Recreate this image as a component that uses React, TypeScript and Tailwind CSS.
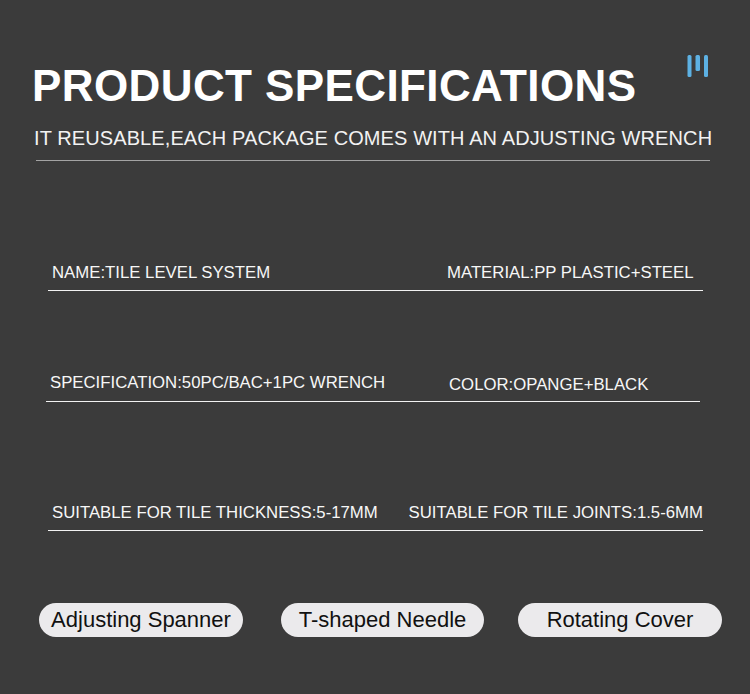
const font = { fontFamily: '"Liberation Sans", Arial, Helvetica, sans-serif' };

type Row = {
  left: string;
  right: string;
  box: string;
  leftCol: string;
  rightCls?: string;
};

const ROWS: Row[] = [
  { left: "NAME:TILE LEVEL SYSTEM", right: "MATERIAL:PP PLASTIC+STEEL", box: "mt-[104px] ml-[48px] w-[655px]", leftCol: "w-[399px]" },
  { left: "SPECIFICATION:50PC/BAC+1PC WRENCH", right: "COLOR:OPANGE+BLACK", box: "mt-[84px] ml-[46px] w-[654px]", leftCol: "w-[403px]", rightCls: "pt-[2px]" },
  { left: "SUITABLE FOR TILE THICKNESS:5-17MM", right: "SUITABLE FOR TILE JOINTS:1.5-6MM", box: "mt-[103px] ml-[48px] w-[655px]", leftCol: "w-[364px]" },
];

const PILLS = [
  { label: "Adjusting Spanner", cls: "ml-[39px] w-[204px]" },
  { label: "T-shaped Needle", cls: "ml-[38px] w-[203px]" },
  { label: "Rotating Cover", cls: "ml-[34px] w-[204px]" },
];

function BarsIcon() {
  return (
    <svg width="22" height="22" viewBox="0 0 22 22" className="mr-[41px]">
      <rect x="0.5" y="0" width="4" height="22" rx="1.5" fill="#5db1e3" />
      <rect x="8.5" y="0" width="4.5" height="16" rx="1.5" fill="#5db1e3" />
      <rect x="17" y="0" width="4" height="22" rx="1.5" fill="#5db1e3" />
    </svg>
  );
}

export default function App() {
  return (
    <div className="w-[750px] h-[694px] bg-[#3b3b3b] overflow-hidden flex flex-col" style={font}>
      {/* header */}
      <div className="flex items-start justify-between pt-[55px]">
        <h1 className="ml-[32px] mt-[9px] text-[44px] leading-[44px] font-bold tracking-[0.4px] text-white whitespace-nowrap">
          PRODUCT SPECIFICATIONS
        </h1>
        <BarsIcon />
      </div>
      <p className="ml-[34px] mt-[20px] text-[20px] leading-[20px] tracking-[0.1px] text-[#f2f2f2] whitespace-nowrap">
        IT REUSABLE,EACH PACKAGE COMES WITH AN ADJUSTING WRENCH
      </p>
      <div className="ml-[36px] mt-[12px] w-[674px] h-px bg-[#a3a3a3]" />

      {/* spec rows */}
      {ROWS.map((r) => (
        <div key={r.left} className={r.box}>
          <div className="flex text-[16.75px] leading-[16.5px] text-[#f7f7f7] whitespace-nowrap">
            <span className={`pl-[4px] ${r.leftCol}`}>{r.left}</span>
            <span className={r.rightCls}>{r.right}</span>
          </div>
          <div className="mt-[8px] h-px bg-[#f2f2f2]" />
        </div>
      ))}

      {/* accessories */}
      <div className="flex mt-[72px]">
        {PILLS.map((p) => (
          <div
            key={p.label}
            className={`${p.cls} h-[34px] rounded-full bg-[#ebeaec] flex items-center justify-center text-[22px] leading-[34px] text-[#111111] whitespace-nowrap`}
          >
            {p.label}
          </div>
        ))}
      </div>
    </div>
  );
}
